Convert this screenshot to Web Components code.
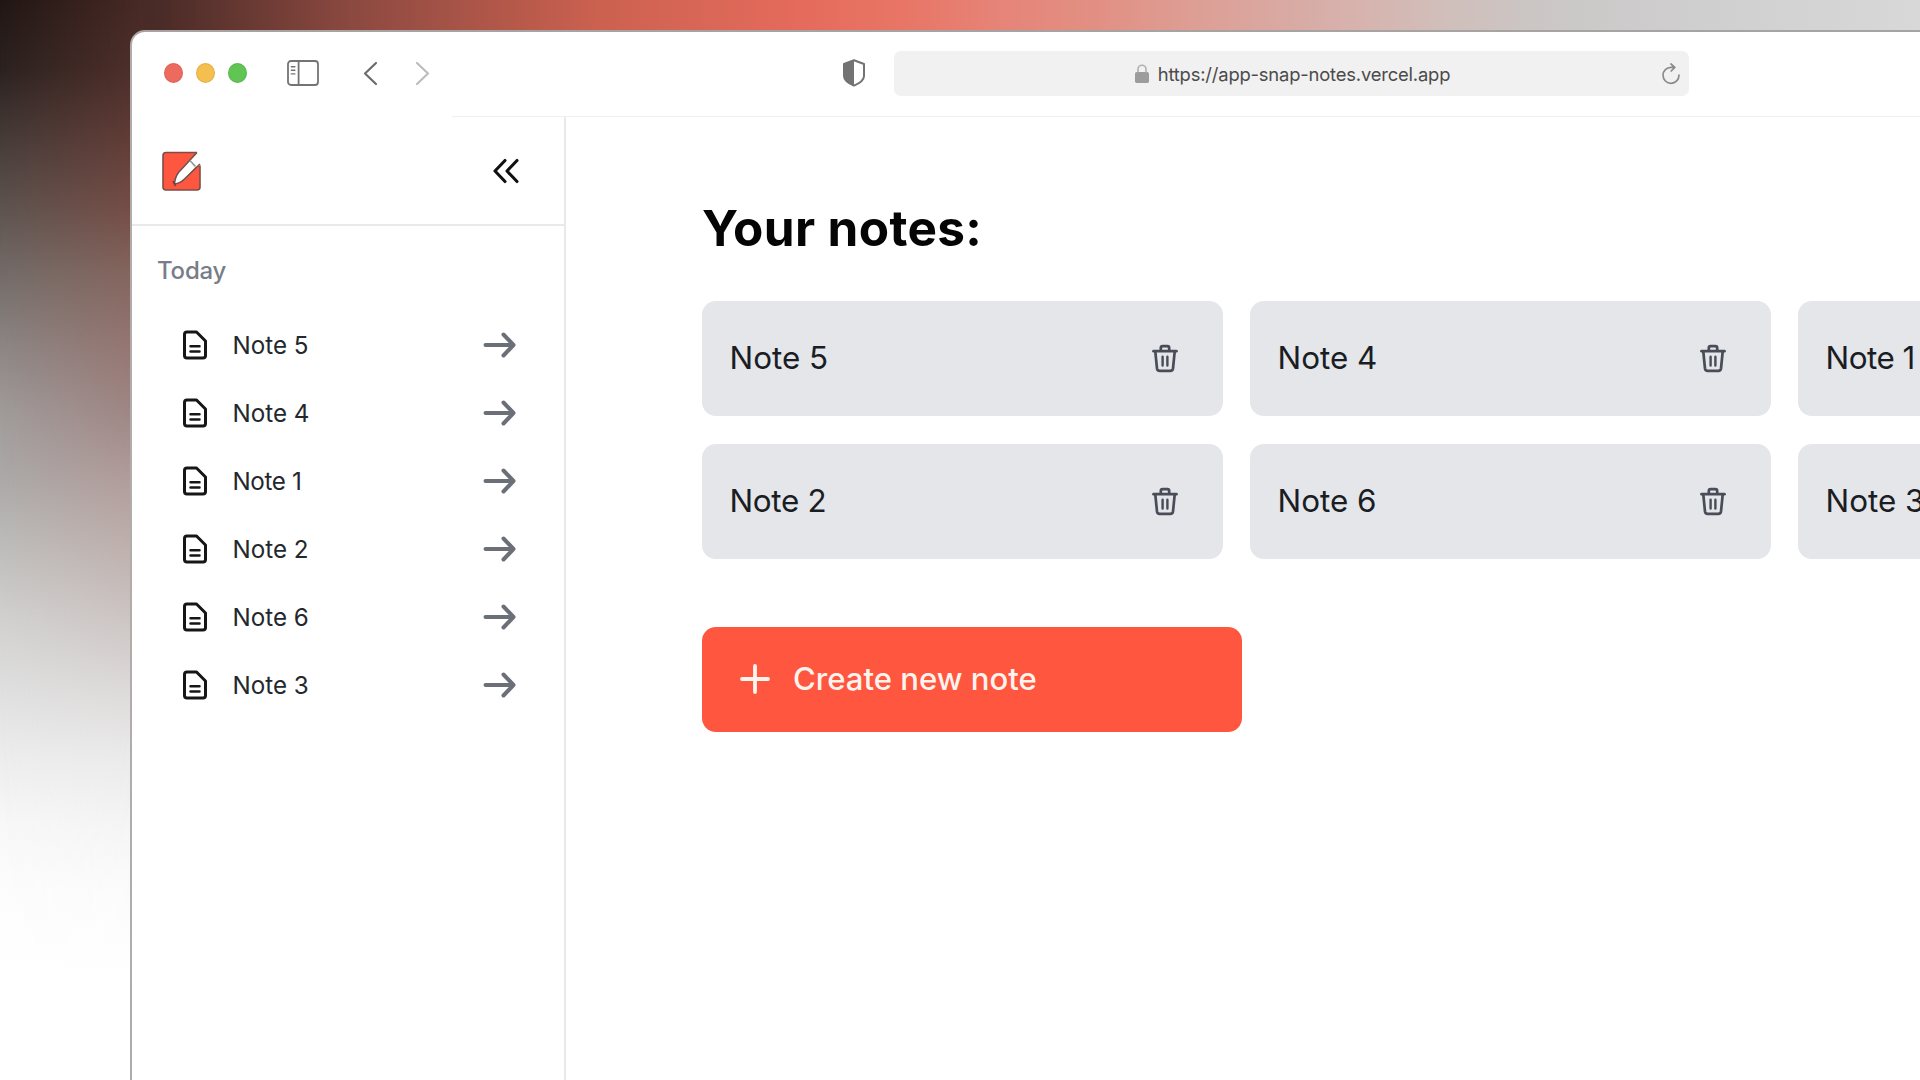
<!DOCTYPE html>
<html lang="en">
<head>
<meta charset="utf-8">
<title>Snap Notes</title>
<style>
html,body{margin:0;width:1920px;height:1080px;overflow:hidden;background:#fff;font-family:Inter,"Liberation Sans",sans-serif}
</style>
</head>
<body>
<app-backdrop>
  <browser-window>
    <browser-toolbar slot="toolbar" url="https://app-snap-notes.vercel.app"></browser-toolbar>
    <notes-sidebar slot="sidebar" heading="Today">
      <sidebar-note>Note 5</sidebar-note>
      <sidebar-note>Note 4</sidebar-note>
      <sidebar-note style="letter-spacing:-.35px">Note 1</sidebar-note>
      <sidebar-note>Note 2</sidebar-note>
      <sidebar-note>Note 6</sidebar-note>
      <sidebar-note>Note 3</sidebar-note>
    </notes-sidebar>
    <notes-board heading="Your notes:">
      <note-card>Note 5</note-card>
      <note-card>Note 4</note-card>
      <note-card style="letter-spacing:-.5px">Note 1</note-card>
      <note-card style="letter-spacing:-.3px">Note 2</note-card>
      <note-card>Note 6</note-card>
      <note-card>Note 3</note-card>
      <create-button slot="action">Create new note</create-button>
    </notes-board>
  </browser-window>
</app-backdrop>
<script>
const define = (name, html) => customElements.define(name, class extends HTMLElement {
  constructor() {
    super();
    this.attachShadow({ mode: 'open' }).innerHTML = html;
  }
  connectedCallback() {
    this.shadowRoot.querySelectorAll('[data-attr]').forEach(n => {
      n.textContent = this.getAttribute(n.dataset.attr);
    });
  }
});

define('app-backdrop', `
<style>
:host{display:block;box-sizing:border-box;position:relative;width:1920px;height:1080px;padding:30px 0 0 130px;overflow:hidden;
 background:linear-gradient(90deg,#231816 0,#4a2b27 160px,#8b4940 350px,#cc6150 600px,#e56b5c 800px,#e87565 900px,#e68478 1000px,#e29084 1100px,#dd9f95 1200px,#d8aba5 1300px,#d7b3ae 1360px,#d0bfbb 1450px,#cac7c6 1550px,#d0cfd0 1700px,#d8d8d8 1920px)}
.edge{position:absolute;left:0;top:0;width:150px;height:1080px}
.a{background:linear-gradient(#211614 0,#2b2220 69px,#463b38 138px,#5d534f 207px,#746c69 275px,#8b8583 344px,#a09b9a 413px,#acaaa9 482px,#bfbebc 551px,#d2d1d0 620px,#dfdfdf 689px,#ededed 757px,#f8f8f8 826px,#fdfdfd 895px,#fff 980px)}
.b{background:linear-gradient(#472925 0,#4f2f2a 69px,#633c36 138px,#764c45 207px,#85655d 275px,#957470 344px,#9f8583 413px,#b29c9a 482px,#bfb0ad 551px,#ccc4c3 620px,#dcd9d8 689px,#eaeaea 757px,#f4f4f4 826px,#fbfbfb 895px,#fff 980px);
 -webkit-mask:linear-gradient(90deg,transparent,#000 140px);mask:linear-gradient(90deg,transparent,#000 140px)}
::slotted(*){position:relative}
</style>
<div class="edge a"></div><div class="edge b"></div><slot></slot>`);

define('browser-window', `
<style>
:host{display:grid;box-sizing:border-box;width:1840px;height:1100px;grid-template:85px 1fr / 434px 1fr;background:#fff;border:2px solid #a7a3a2;border-width:2px 0 0 2px;border-left-color:#b0acab;border-radius:15px 0 0 0;overflow:hidden}
.t{grid-column:1/3;display:flex}
.s,.m{display:flex;min-width:0}
</style>
<div class="t"><slot name="toolbar"></slot></div>
<div class="s"><slot name="sidebar"></slot></div>
<div class="m"><slot></slot></div>`);

define('browser-toolbar', `
<style>
:host{display:flex;align-items:center;position:relative;width:100%;box-sizing:border-box;height:85px;padding-left:32px;
 background:linear-gradient(#efefef,#efefef) 320px 100%/1600px 1px no-repeat}
.dots{display:flex;gap:13px;margin-top:-4px}
.dots i{width:19px;height:20px;border-radius:50%;background:#ed6a5e;box-shadow:inset 0 0 0 1px rgba(0,0,0,.08)}
.dots i:nth-child(2){background:#f5bf4f}.dots i:nth-child(3){background:#61c554}
svg{display:block;flex:none;margin-top:-3px}
.bar{display:flex;align-items:center;justify-content:center;box-sizing:border-box;width:795px;height:45px;margin:-2px 0 0 28px;border-radius:7px;background:#f1f1f1;padding:1px 0 0 2px;position:relative}
.bar .lock{margin:-2px 9px 0 0}
.url{font-size:18.4px;line-height:24px;color:#4b4b4b;white-space:nowrap;letter-spacing:-.18px}
.re{position:absolute;right:8px;top:15px}
</style>
<div class="dots"><i></i><i></i><i></i></div>
<svg style="margin-left:40px" width="32" height="26" viewBox="0 0 32 26" fill="none" stroke="#747474" stroke-width="1.8"><rect x="1" y="1" width="30" height="24" rx="3"/><path d="M11.6 1v24"/><path d="M4.3 6.8h3.6M4.3 10.3h3.6M4.3 13.9h3.6" stroke-width="1.4" stroke-linecap="round"/></svg>
<svg style="margin-left:44px" width="15" height="25" viewBox="0 0 15 25" fill="none" stroke="#6b6b6b" stroke-width="2.2" stroke-linecap="round" stroke-linejoin="round"><path d="M13 2 2 12.5 13 23"/></svg>
<svg style="margin-left:37px" width="15" height="25" viewBox="0 0 15 25" fill="none" stroke="#bdbdbd" stroke-width="2.2" stroke-linecap="round" stroke-linejoin="round"><path d="M2 2l11 10.500L2 23"/></svg>
<svg style="margin-left:412px" width="24" height="28" viewBox="0 0 24 28"><path d="M12 1.300 22 5v12c0 4-5 7.500-10 9.700C7 24.500 2 21 2 17V5z" fill="#fff" stroke="#737373" stroke-width="2" stroke-linejoin="round"/><path d="M12 1v26C7 24.500 2 21 2 17V5z" fill="#737373"/></svg>
<div class="bar">
<svg class="lock" width="14" height="19" viewBox="0 0 14 19"><rect x="0" y="8" width="14" height="11" rx="1.800" fill="#9c9c9c"/><path d="M3 8.500V5.200a4 4 0 0 1 8 0v3.300" fill="none" stroke="#b0b0b0" stroke-width="1.600"/></svg>
<span class="url" data-attr="url"></span>
<svg class="re" width="20" height="22" viewBox="0 0 20 22" fill="none" stroke="#8a8a8a" stroke-width="1.700" stroke-linecap="round" stroke-linejoin="round"><path d="M18 12.200a8 8 0 1 1-8-7.900h3.700M10 1l3.800 3.400L10.200 8"/></svg>
</div>`);

define('notes-sidebar', `
<style>
:host{display:flex;flex-direction:column;width:434px;box-sizing:border-box;border-right:2px solid #e8e9eb}
header{display:flex;justify-content:space-between;align-items:center;height:107px;padding:0 44px 0 29px;border-bottom:2px solid #e8e9eb}
h2{margin:0;padding:31px 0 0 25px;font-size:24px;line-height:28px;font-weight:500;color:#787d87;letter-spacing:-.2px}
nav{display:flex;flex-direction:column;margin-top:25.500px;padding:0 47px 0 48px}
</style>
<header>
<svg width="42" height="42" viewBox="0 0 42 42"><path d="M5 2.500h31L27 13l12 3v21q0 3-3 3H5q-3 0-3-3V5.500q0-3 3-3z" fill="#ff5640"/><path d="M36 2.500H5q-3 0-3 3V37q0 3 3 3h31q3 0 3-3V15.500" fill="none" stroke="#7a4f48" stroke-width="1.600"/><path d="M36 2.500 28.500 11l5.500 6.500 6-3V2z" fill="#fff"/><path d="M13.500 34c.3-4.500 1.500-8 4-11.500L28 11l6 6.500L23.500 29c-2.800 2.800-5.500 4.300-10 5z" fill="#fff"/><path d="M36 2.500 17.500 22.500c-2.500 3.500-3.700 7-4 11.500 4.500-.7 7.200-2.200 10-5L39 14" fill="none" stroke="#6b5450" stroke-width="1.500" stroke-linejoin="round"/><path d="m12 31 2.500 5" stroke="#6b4038" stroke-width="1.500"/><path d="m29 10.500 5.500 6" stroke="#84a396" stroke-width="1.600"/></svg>
<svg width="28" height="28" viewBox="0 0 28 28" fill="none" stroke="#111" stroke-width="3.100" stroke-linecap="round" stroke-linejoin="round"><path d="M13 3.500 3 14l10 10.500M25 3.500 15 14l10 10.500"/></svg>
</header>
<h2 data-attr="heading"></h2>
<nav><slot></slot></nav>`);

define('sidebar-note', `
<style>
:host{display:flex;align-items:center;height:68px;font-size:24.200px;color:#24272d}
span{flex:1;margin:1px 0 0 22.500px;white-space:nowrap}
svg{flex:none}
</style>
<svg width="30" height="32" viewBox="0 0 30 32" fill="none" stroke="#161616" stroke-width="3" stroke-linejoin="round" stroke-linecap="round"><path d="M7 3h9.500L25.500 12v14.500q0 2.500-2.500 2.500H7q-2.500 0-2.500-2.500V5.500Q4.500 3 7 3z"/><path d="M10.500 17.300h9M10.500 22.600h9" stroke-width="2.500"/></svg>
<span><slot></slot></span>
<svg width="34" height="28" viewBox="0 0 34 28" fill="none" stroke="#6b7078" stroke-width="4" stroke-linecap="round" stroke-linejoin="round"><path d="M2.500 14H30.500M20.500 3.500 30.500 14 20.500 24.500"/></svg>`);

define('notes-board', `
<style>
:host{display:block;padding:79px 0 0 136px}
h1{margin:0;font-size:49.500px;line-height:64px;font-weight:650;color:#050505;white-space:nowrap;letter-spacing:.35px}
.grid{display:grid;grid-template-columns:repeat(3,520.500px);gap:28px 27.500px;margin-top:40.500px}
.act{display:flex;margin-top:68px}
</style>
<h1 data-attr="heading"></h1>
<div class="grid"><slot></slot></div>
<div class="act"><slot name="action"></slot></div>`);

define('note-card', `
<style>
:host{display:flex;align-items:center;justify-content:space-between;box-sizing:border-box;height:115px;padding:0 43px 1px 27.500px;border-radius:14px;background:#e4e6ea;font-size:31.400px;color:#1a1d23}
</style>
<span><slot></slot></span>
<svg width="30" height="32" viewBox="0 0 30 32" fill="none" stroke="#484d57" stroke-width="2.700" stroke-linejoin="round" stroke-linecap="round"><path d="M3.500 9.200h23"/><path d="M10.800 8.500V6q0-1.800 1.800-1.800h4.800q1.800 0 1.800 1.800v2.500"/><path d="M5.300 9.500 7 26.500q.3 2.300 2.600 2.300h10.800q2.300 0 2.600-2.300L24.700 9.500"/><path d="M12.600 14.800v8.700M17.400 14.800v8.700" stroke-width="2.400"/></svg>`);

define('create-button', `
<style>
:host{display:flex;align-items:center;box-sizing:border-box;width:539.500px;height:105.500px;padding:0 0 1px 37px;border-radius:14px;background:#ff563f;color:#fff3ee;font-size:31.100px;font-weight:500}
span{margin-left:22px;white-space:nowrap}
</style>
<svg width="32" height="32" viewBox="0 0 32 32" fill="none" stroke="#fff3ee" stroke-width="3.800" stroke-linecap="round"><path d="M16 3v26M3 16h26"/></svg>
<span><slot></slot></span>`);
</script>
</body>
</html>
